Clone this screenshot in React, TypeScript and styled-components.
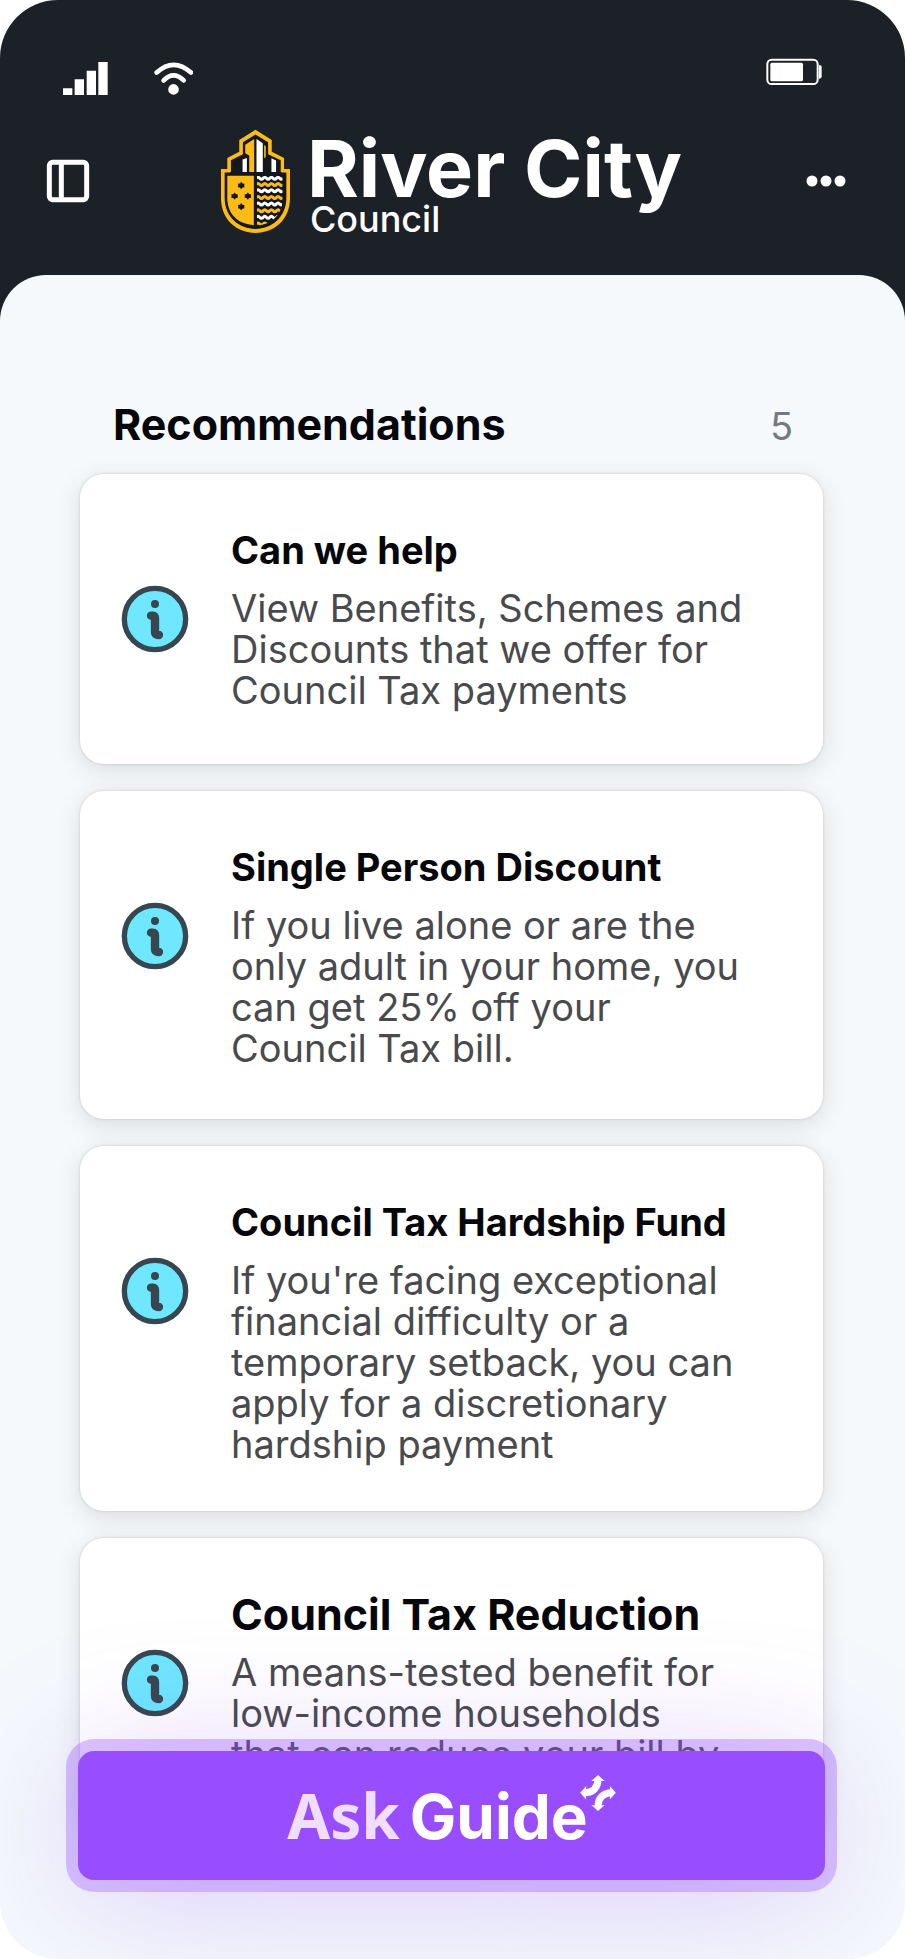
import React from "react";
import styled, { createGlobalStyle } from "styled-components";

const GlobalStyle = createGlobalStyle`
  *, *::before, *::after { box-sizing: border-box; }
  body {
    margin: 0;
    background: #ffffff;
    font-family: Inter, "Liberation Sans", sans-serif;
  }
  h1, h2, p, ul { margin: 0; padding: 0; }
`;

const Phone = styled.div`
  position: relative;
  display: flex;
  flex-direction: column;
  min-height: 100vh;
  overflow: hidden;
  border-radius: 58px;
  background: #f5f9fc;
`;

const Header = styled.header`
  padding: 58px 57px 82px 46px;
  color: #ffffff;
  background: #1c2128;
`;

const StatusBar = styled.div`
  display: flex;
  align-items: flex-start;
  gap: 46px;
  height: 66px;
  padding: 0 26px 0 17px;
`;

const Cellular = styled.svg`
  width: 45px;
  height: 33px;
  margin-top: 4px;
`;

const Wifi = styled.svg`
  width: 39px;
  height: 33px;
  margin-top: 4px;
`;

const Battery = styled.svg`
  width: 56px;
  height: 28px;
  margin-left: auto;
`;

const NavBar = styled.nav`
  display: flex;
  align-items: center;
  justify-content: space-between;
  height: 114px;
`;

const IconButton = styled.button`
  display: flex;
  align-items: center;
  justify-content: center;
  width: 44px;
  height: 44px;
  padding: 0;
  border: 0;
  color: inherit;
  background: none;
  cursor: pointer;
`;

const Brand = styled.a`
  display: flex;
  gap: 16px;
  margin-left: 8px;
  color: inherit;
  text-decoration: none;
`;

const Crest = styled.svg`
  width: 71px;
  height: 105px;
`;

const Wordmark = styled.span`
  display: flex;
  flex-direction: column;
  align-items: flex-start;
`;

const BrandName = styled.span`
  font-size: 79px;
  font-weight: 700;
  line-height: 78px;
`;

const BrandSub = styled.span`
  padding-left: 3px;
  font-size: 36px;
  font-weight: 500;
  line-height: 24px;
`;

const Sheet = styled.main`
  flex: 1;
  margin-top: -45px;
  padding: 123px 82px 131px 80px;
  border-radius: 46px 46px 0 0;
  background: #f5f9fc;
`;

const SectionHead = styled.div`
  display: flex;
  align-items: baseline;
  justify-content: space-between;
  margin-bottom: 22px;
  padding: 0 30px 0 33px;
`;

const SectionTitle = styled.h1`
  font-size: 43px;
  font-weight: 700;
  line-height: 52px;
  color: #05070b;
`;

const Count = styled.span`
  font-size: 38px;
  line-height: 52px;
  color: #76797d;
`;

const CardList = styled.ul`
  display: flex;
  flex-direction: column;
  gap: 27px;
  list-style: none;
`;

const Card = styled.li<{ $height: number }>`
  display: flex;
  gap: 42px;
  min-height: ${(p) => p.$height}px;
  padding: 54px 40px 40px 41px;
  border-radius: 24px;
  background: #ffffff;
  box-shadow: 0 0 2px 1px rgba(60, 60, 60, 0.1), 0 6px 24px rgba(60, 60, 60, 0.14);
`;

const InfoIcon = styled.svg`
  flex: none;
  width: 68px;
  height: 68px;
  margin-top: 57px;
`;

const CardText = styled.div`
  flex: 1;
  min-width: 0;
`;

const CardTitle = styled.h2<{ $large?: boolean }>`
  margin-bottom: 16px;
  font-size: ${(p) => (p.$large ? 43 : 38)}px;
  font-weight: 700;
  line-height: 44px;
  white-space: nowrap;
  color: #05070b;
`;

const CardBody = styled.p`
  font-size: 38px;
  line-height: 41px;
  white-space: pre;
  color: #484a4d;
`;

const Dock = styled.div`
  position: absolute;
  right: 0;
  bottom: 0;
  left: 0;
  padding: 0 80px 79px 78px;
  padding-bottom: 79px;
`;

const AskButton = styled.button`
  display: flex;
  align-items: center;
  justify-content: center;
  width: 100%;
  height: 129px;
  padding: 0;
  border: 0;
  border-radius: 16px;
  color: #ffffff;
  background: #984eff;
  box-shadow: 0 0 0 12px rgba(152, 78, 255, 0.33), 0 14px 140px rgba(130, 60, 240, 0.26);
  cursor: pointer;
`;

const AskLabel = styled.span`
  display: flex;
  align-items: baseline;
  gap: 10px;
`;

const AskWord = styled.span`
  font-family: "Noto Sans", sans-serif;
  font-size: 62px;
  font-weight: 700;
  line-height: 80px;
  color: #f0defe;
`;

const GuideWord = styled.span`
  font-family: Inter, sans-serif;
  font-size: 62px;
  font-weight: 700;
  line-height: 80px;
`;

const ArrowsMark = styled.svg`
  align-self: flex-start;
  width: 36px;
  height: 36px;
  margin-left: -18px;
`;

const waveRows = [158, 177, 196, 216, 236, 256, 276, 296];

const wave = (y: number) =>
  `M170 ${y}q5 -6 10 0t10 0t10 0t10 0t10 0t10 0t10 0t10 0`;

function CouncilCrest() {
  return (
    <Crest viewBox="60 10 214 316" aria-hidden="true">
      <path
        fill="#fdbb18"
        d="M167 12L216 43V78L253 97V130H271V218C271 285 222 323 167 323S63 285 63 218V130H82V97L118 78V43Z"
      />
      <path
        fill="#14171b"
        d="M167 26L205 50V86L243 104V141H260V218C260 277 214 311 167 311S74 277 74 218V141H93V104L129 86V50Z"
      />
      <path fill="#fdbb18" d="M136 57L163 40V148H148V90L136 83Z" />
      <path fill="#ffffff" d="M170 40L189 53V148H170Z" />
      <path fill="#ffffff" d="M128 102L141 97V141H128Z" />
      <path fill="#ffffff" d="M215 98L229 105V141H215Z" />
      <path fill="#fdbb18" d="M193 58L198 62V94L193 98Z" />
      <path fill="#14171b" d="M90 139H245V151H90Z" />
      <path fill="#fdbb18" d="M82 151H162V300C115 296 82 268 82 218Z" />
      <clipPath id="crest-water">
        <path d="M171 151H249V218C249 268 216 298 171 301Z" />
      </clipPath>
      <g clipPath="url(#crest-water)" fill="none" strokeWidth="9">
        {waveRows.map((y, i) => (
          <path key={y} d={wave(y)} stroke={i % 2 ? "#fdbb18" : "#ffffff"} />
        ))}
      </g>
      <g fill="#14171b">
        <path d="M124 169l4 5 6 1-1 5 1 5-6 1-4 5-4-5-6-1 1-5-1-5 6-1z" />
        <path d="M104 201l4 5 6 1-1 5 1 5-6 1-4 5-4-5-6-1 1-5-1-5 6-1z" />
        <path d="M144 201l4 5 6 1-1 5 1 5-6 1-4 5-4-5-6-1 1-5-1-5 6-1z" />
        <path d="M124 233l4 5 6 1-1 5 1 5-6 1-4 5-4-5-6-1 1-5-1-5 6-1z" />
      </g>
    </Crest>
  );
}

function InfoBadge() {
  return (
    <InfoIcon viewBox="33 29 204 204" aria-hidden="true">
      <circle cx="135" cy="131" r="92" fill="#6ee7ff" stroke="#37474f" strokeWidth="16" />
      <circle cx="135" cy="86" r="12" fill="#37474f" />
      <path
        d="M123 121H129Q135 121 135 128V170Q135 179 147 179"
        fill="none"
        stroke="#37474f"
        strokeWidth="25"
        strokeLinecap="round"
        strokeLinejoin="round"
      />
    </InfoIcon>
  );
}

type Recommendation = {
  title: string;
  body: string;
  height: number;
  large?: boolean;
};

const recommendations: Recommendation[] = [
  {
    title: "Can we help",
    body: "View Benefits, Schemes and\nDiscounts that we offer for\nCouncil Tax payments",
    height: 290,
  },
  {
    title: "Single Person Discount",
    body: "If you live alone or are the\nonly adult in your home, you\ncan get 25% off your\nCouncil Tax bill.",
    height: 328,
  },
  {
    title: "Council Tax Hardship Fund",
    body: "If you're facing exceptional\nfinancial difficulty or a\ntemporary setback, you can\napply for a discretionary\nhardship payment",
    height: 365,
  },
  {
    title: "Council Tax Reduction",
    body: "A means-tested benefit for\nlow-income households\nthat can reduce your bill by",
    height: 290,
    large: true,
  },
];

export default function App() {
  return (
    <>
      <GlobalStyle />
      <Phone>
        <Header>
          <StatusBar>
            <Cellular viewBox="98 65 135 99" fill="#ffffff" aria-hidden="true">
              <path d="M98 144H126V164H98ZM133 117H161V164H133ZM169 91H197V164H169ZM204 65H232V164H204Z" />
            </Cellular>
            <Wifi viewBox="370 65 118 100" fill="none" stroke="#ffffff" strokeLinecap="round" aria-hidden="true">
              <path d="M378 97Q429 50 482 97" strokeWidth="14" />
              <path d="M399 121Q429 90 460 121" strokeWidth="14" />
              <circle cx="429" cy="148" r="16" fill="#ffffff" stroke="none" />
            </Wifi>
            <Battery viewBox="106 55 168 84" aria-hidden="true">
              <rect x="110" y="60" width="151" height="73" rx="13" fill="none" stroke="#ffffff" strokeWidth="6" />
              <rect x="119" y="69" width="98" height="56" rx="5" fill="#ffffff" />
              <path d="M265 76Q273 76 273 83V110Q273 117 265 117Z" fill="#ffffff" />
            </Battery>
          </StatusBar>
          <NavBar>
            <IconButton type="button" aria-label="Toggle side panel">
              <svg width="44" height="44" viewBox="50 358 132 132" fill="none" stroke="#ffffff" strokeWidth="15" aria-hidden="true">
                <rect x="60" y="368" width="112" height="112" rx="10" />
                <path d="M96 368V480" />
              </svg>
            </IconButton>
            <Brand href="#">
              <CouncilCrest />
              <Wordmark>
                <BrandName>River City</BrandName>
                <BrandSub>Council</BrandSub>
              </Wordmark>
            </Brand>
            <IconButton type="button" aria-label="More options">
              <svg width="40" height="12" viewBox="0 0 40 12" fill="#ffffff" aria-hidden="true">
                <circle cx="6" cy="6" r="5.5" />
                <circle cx="20" cy="6" r="5.5" />
                <circle cx="34" cy="6" r="5.5" />
              </svg>
            </IconButton>
          </NavBar>
        </Header>
        <Sheet>
          <SectionHead>
            <SectionTitle>Recommendations</SectionTitle>
            <Count>{recommendations.length + 1}</Count>
          </SectionHead>
          <CardList>
            {recommendations.map((item) => (
              <Card key={item.title} $height={item.height}>
                <InfoBadge />
                <CardText>
                  <CardTitle $large={item.large}>{item.title}</CardTitle>
                  <CardBody>{item.body}</CardBody>
                </CardText>
              </Card>
            ))}
          </CardList>
        </Sheet>
        <Dock>
          <AskButton type="button">
            <AskLabel>
              <AskWord>Ask</AskWord>
              <GuideWord>Guide</GuideWord>
              <ArrowsMark viewBox="0 0 106 107" aria-hidden="true">
                <g fill="none" stroke="#ffffff" strokeWidth="21">
                  <path d="M53 12C53 38 38 53 12 53" />
                  <path d="M94 53C68 53 53 68 53 95" />
                </g>
                <g fill="#ffffff">
                  <path d="M53 0L73 18Q53 14 33 18Z" />
                  <path d="M0 53L18 33Q14 53 18 73Z" />
                  <path d="M106 53L88 33Q92 53 88 73Z" />
                  <path d="M53 107L73 89Q53 93 33 89Z" />
                </g>
              </ArrowsMark>
            </AskLabel>
          </AskButton>
        </Dock>
      </Phone>
    </>
  );
}
